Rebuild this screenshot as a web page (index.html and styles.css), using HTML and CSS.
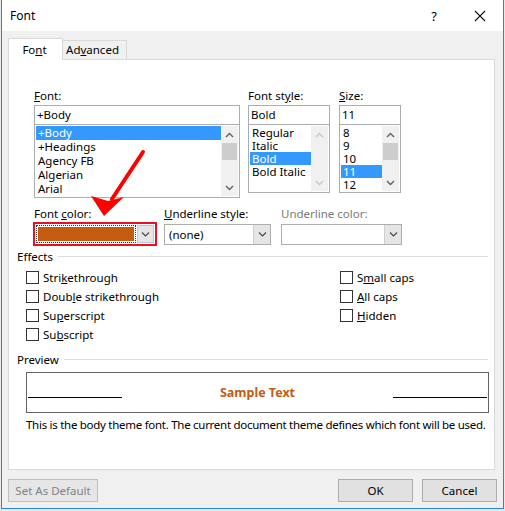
FILE: index.html
```html
<!DOCTYPE html>
<html>
<head>
<meta charset="utf-8">
<link rel="stylesheet" href="styles.css">
</head>
<body>
<div class="window">
  <div class="titlebar">
    <span class="title">Font</span>
    <span class="tb-btn">?</span>
    <span class="tb-btn"><svg width="12" height="12" viewBox="0 0 12 12"><path d="M1 1L11 11M11 1L1 11" stroke="#111" stroke-width="1.1" fill="none"/></svg></span>
  </div>
  <div class="content">
    <div class="tabs">
      <div class="tab active">Fo<u>n</u>t</div>
      <div class="tab">Ad<u>v</u>anced</div>
    </div>
    <div class="panel">
      <div class="fields">
        <div class="col c-font">
          <div class="lbl"><u>F</u>ont:</div>
          <div class="textbox">+Body</div>
          <div class="listbox lb-font">
            <div class="items rows14">
              <div class="item sel">+Body</div>
              <div class="item">+Headings</div>
              <div class="item">Agency FB</div>
              <div class="item">Algerian</div>
              <div class="item">Arial</div>
            </div>
            <div class="scroll">
              <div class="sarrow"><svg width="9" height="6" viewBox="0 0 9 6"><path d="M1 5L4.5 1.5L8 5" fill="none" stroke="#606060" stroke-width="1.4"/></svg></div>
              <div class="thumb"></div>
              <div class="sfill"></div>
              <div class="sarrow"><svg width="9" height="6" viewBox="0 0 9 6"><path d="M1 1L4.5 4.5L8 1" fill="none" stroke="#606060" stroke-width="1.4"/></svg></div>
            </div>
          </div>
        </div>
        <div class="col c-style">
          <div class="lbl">Font st<u>y</u>le:</div>
          <div class="textbox">Bold</div>
          <div class="listbox lb-small">
            <div class="items rows13">
              <div class="item">Regular</div>
              <div class="item">Italic</div>
              <div class="item sel">Bold</div>
              <div class="item">Bold Italic</div>
            </div>
            <div class="scroll">
              <div class="sarrow"><svg width="9" height="6" viewBox="0 0 9 6"><path d="M1 5L4.5 1.5L8 5" fill="none" stroke="#c8c8c8" stroke-width="1.4"/></svg></div>
              <div class="sfill"></div>
              <div class="sarrow"><svg width="9" height="6" viewBox="0 0 9 6"><path d="M1 1L4.5 4.5L8 1" fill="none" stroke="#c8c8c8" stroke-width="1.4"/></svg></div>
            </div>
          </div>
        </div>
        <div class="col c-size">
          <div class="lbl"><u>S</u>ize:</div>
          <div class="textbox">11</div>
          <div class="listbox lb-small">
            <div class="items rows13">
              <div class="item">8</div>
              <div class="item">9</div>
              <div class="item">10</div>
              <div class="item sel">11</div>
              <div class="item">12</div>
            </div>
            <div class="scroll">
              <div class="sarrow"><svg width="9" height="6" viewBox="0 0 9 6"><path d="M1 5L4.5 1.5L8 5" fill="none" stroke="#606060" stroke-width="1.4"/></svg></div>
              <div class="thumb"></div>
              <div class="sfill"></div>
              <div class="sarrow"><svg width="9" height="6" viewBox="0 0 9 6"><path d="M1 1L4.5 4.5L8 1" fill="none" stroke="#606060" stroke-width="1.4"/></svg></div>
            </div>
          </div>
        </div>
      </div>

      <div class="fields row2">
        <div class="col c-color">
          <div class="lbl lbl-color">Font <u>c</u>olor:</div>
          <div class="hl">
            <div class="combo combo-color">
              <div class="swatch-wrap"><div class="swatch"></div></div>
              <div class="dd"><svg width="9" height="5" viewBox="0 0 9 5"><path d="M1 0.5L4.5 4L8 0.5" fill="none" stroke="#444" stroke-width="1.1"/></svg></div>
            </div>
          </div>
        </div>
        <div class="col c-ustyle">
          <div class="lbl"><u>U</u>nderline style:</div>
          <div class="combo">
            <div class="cval">(none)</div>
            <div class="dd"><svg width="9" height="5" viewBox="0 0 9 5"><path d="M1 0.5L4.5 4L8 0.5" fill="none" stroke="#444" stroke-width="1.1"/></svg></div>
          </div>
        </div>
        <div class="col c-ucolor">
          <div class="lbl disabled">Underline color:</div>
          <div class="combo">
            <div class="cval"></div>
            <div class="dd"><svg width="9" height="5" viewBox="0 0 9 5"><path d="M1 0.5L4.5 4L8 0.5" fill="none" stroke="#444" stroke-width="1.1"/></svg></div>
          </div>
        </div>
      </div>

      <div class="group-head"><span>Effects</span><div class="rule"></div></div>
      <div class="effects">
        <div class="eff-col">
          <div class="chk"><span class="box"></span><span>Stri<u>k</u>ethrough</span></div>
          <div class="chk"><span class="box"></span><span>Doub<u>l</u>e strikethrough</span></div>
          <div class="chk"><span class="box"></span><span>Su<u>p</u>erscript</span></div>
          <div class="chk"><span class="box"></span><span>Su<u>b</u>script</span></div>
        </div>
        <div class="eff-col eff-right">
          <div class="chk"><span class="box"></span><span>S<u>m</u>all caps</span></div>
          <div class="chk"><span class="box"></span><span><u>A</u>ll caps</span></div>
          <div class="chk"><span class="box"></span><span><u>H</u>idden</span></div>
        </div>
      </div>

      <div class="group-head preview-head"><span>Preview</span><div class="rule"></div></div>
      <div class="preview">
        <div class="pline"></div>
        <div class="sample">Sample Text</div>
        <div class="pline"></div>
      </div>
      <div class="desc">This is the body theme font. The current document theme defines which font will be used.</div>
    </div>

    <div class="buttons">
      <div class="btn disabled btn-default">Set As Default</div>
      <div class="spacer"></div>
      <div class="btn">OK</div>
      <div class="btn">Cancel</div>
    </div>
  </div>
</div>
<svg class="arrow" width="505" height="511" viewBox="0 0 505 511">
  <path d="M143 152L112 199" stroke="#ff0000" stroke-width="4" stroke-linecap="round" fill="none"/>
  <polygon points="104,216 91,196 108,201 124,197" fill="#ff0000"/>
</svg>
</body>
</html>
```

FILE: styles.css
```css
* { box-sizing: border-box; }
html, body { margin: 0; padding: 0; }
body {
  background: #e9e9e9;
  font-family: "Noto Sans", "Open Sans", sans-serif;
  font-size: 11.5px;
  color: #000;
  position: relative;
  width: 505px;
  height: 511px;
  overflow: hidden;
}
u { text-decoration: underline; text-underline-offset: 1px; }

.window {
  margin-left: 1px;
  width: 503px;
  height: 509px;
  border: 1px solid #2f80d6;
  border-top: none;
  background: #f0f0f0;
}

.titlebar {
  height: 31px;
  background: #fff;
  display: flex;
  align-items: center;
}
.title { flex: 1; padding-left: 8px; font-size: 12px; }
.tb-btn {
  width: 46px;
  height: 31px;
  display: flex;
  align-items: center;
  justify-content: center;
  font-size: 13px;
}

.content { padding: 6px 8px 0 6px; }

.tabs { display: flex; align-items: flex-end; height: 22px; position: relative; z-index: 1; }
.tab {
  height: 19px;
  width: 64px;
  border: 1px solid #d9d9d9;
  border-left: none;
  border-bottom: none;
  background: #f0f0f0;
  text-align: center;
  line-height: 18px;
  padding-right: 4px;
}
.tab.active {
  width: 55px;
  height: 22px;
  border-left: 1px solid #d9d9d9;
  background: #fff;
  line-height: 22px;
  padding-left: 2px;
  margin-bottom: -1px;
}

.panel {
  width: 487px;
  height: 411px;
  border: 1px solid #d9d9d9;
  background: #fff;
  padding-top: 28px;
}

.fields { display: flex; padding-left: 25px; align-items: flex-start; }
.col { display: flex; flex-direction: column; }
.c-font { width: 206px; }
.c-style { width: 82px; margin-left: 8px; }
.c-size { width: 62px; margin-left: 9px; }
.lbl { height: 17px; line-height: 15px; }
.lbl.disabled { color: #7a7a7a; }

.textbox {
  height: 20px;
  border: 1px solid #abadb3;
  line-height: 18px;
  padding-left: 2px;
}
.listbox {
  display: flex;
  border: 1px solid #abadb3;
  border-top: none;
  padding: 1px;
}
.lb-font { height: 73px; }
.lb-small { height: 68px; }
.items { flex: 1; overflow: hidden; }
.item { padding-left: 2px; white-space: nowrap; }
.rows14 .item { height: 14px; line-height: 14px; }
.rows13 .item { height: 13px; line-height: 13px; }
.item.sel { background: #3399ff; color: #fff; }
.scroll {
  width: 17px;
  background: #f0f0f0;
  display: flex;
  flex-direction: column;
}
.sarrow { height: 17px; display: flex; align-items: center; justify-content: center; }
.thumb { height: 17px; margin: 0 1px; background: #cdcdcd; }
.sfill { flex: 1; }

.row2 { margin-top: 8px; padding-left: 24px; }
.c-color { width: 124px; }
.lbl-color { padding-left: 1px; height: 16px; }
.c-ustyle { width: 107px; margin-left: 7px; }
.c-ucolor { width: 121px; margin-left: 10px; }
.c-ustyle .lbl, .c-ucolor .lbl { height: 18px; }

.hl { border: 2px solid #e81123; padding: 1px; height: 24px; }
.combo {
  height: 21px;
  border: 1px solid #adadad;
  background: #fff;
  display: flex;
}
.cval { flex: 1; line-height: 19px; padding-left: 4px; }
.dd {
  width: 17px;
  background: #e5e5e5;
  border-left: 1px solid #cfcfcf;
  display: flex;
  align-items: center;
  justify-content: center;
}
.combo-color { height: 18px; border: none; }
.swatch-wrap {
  flex: 1;
  border: 1px dotted #333;
  padding: 1px;
  margin-right: 1px;
}
.swatch { height: 100%; background: #c55a11; }
.combo-color .dd { border: 1px solid #c8c8c8; }

.group-head {
  display: flex;
  align-items: center;
  padding-left: 8px;
  padding-right: 6px;
  margin-top: 2px;
  height: 16px;
}
.group-head .rule { flex: 1; height: 1px; background: #dcdcdc; margin-left: 5px; }

.effects { display: flex; padding-left: 17px; margin-top: 4px; }
.eff-col { width: 314px; flex: none; }
.eff-right { width: auto; flex: 1; }
.chk { height: 19px; display: flex; align-items: center; }
.box {
  width: 13px;
  height: 13px;
  border: 1px solid #333;
  margin-right: 4px;
  flex: none;
}

.preview-head { margin-top: 7px; }
.preview {
  margin-left: 17px;
  margin-top: 5px;
  width: 463px;
  height: 41px;
  border: 1px solid #646464;
  display: flex;
  padding: 0 1px;
}
.pline { width: 94px; height: 1px; background: #000; margin-top: 24px; }
.sample {
  flex: 1;
  text-align: center;
  font-weight: bold;
  color: #c55a11;
  font-size: 12.5px;
  line-height: 16px;
  margin-top: 12px;
}
.desc {
  margin-left: 17px;
  margin-top: 4px;
  line-height: 16px;
  white-space: nowrap;
  letter-spacing: -0.28px;
}

.buttons { display: flex; margin-top: 9px; margin-right: -2px; gap: 9px; }
.spacer { flex: 1; }
.btn {
  width: 75px;
  height: 23px;
  border: 1px solid #adadad;
  background: #e1e1e1;
  text-align: center;
  line-height: 21px;
}
.btn-default { width: 90px; }
.btn.disabled { color: #838383; border-color: #bfbfbf; background: #e6e6e6; }

.arrow { position: absolute; left: 0; top: 0; pointer-events: none; }
```
